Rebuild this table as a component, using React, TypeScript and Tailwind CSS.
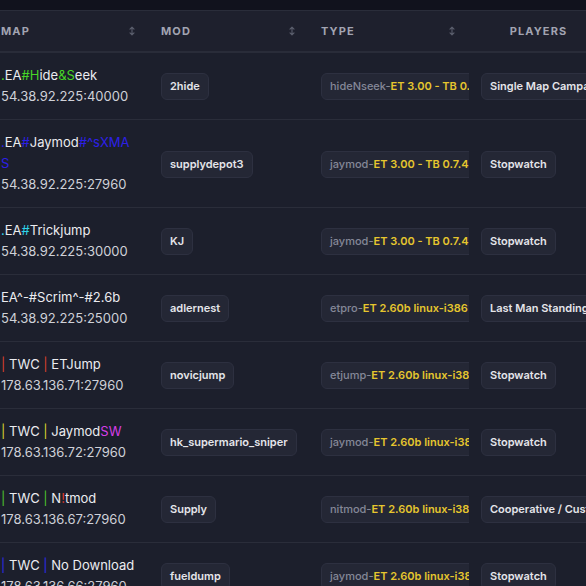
import { Fragment } from 'react'

type Seg = [string, string?]

interface Server {
  name: Seg[]
  ip: string
  map: string
  mod: string
  version: string
  gametype: string
}

const G = '#47d627'
const B = '#2d1fe8'
const C = '#2fd3e8'

const servers: Server[] = [
  { name: [['.', G], ['EA'], ['#H', G], ['ide'], ['&S', G], ['eek']], ip: '54.38.92.225:40000', map: '2hide', mod: 'hideNseek', version: 'ET 3.00 - TB 0.7.4 linux-i386', gametype: 'Single Map Campaign' },
  { name: [['.', B], ['EA'], ['#', B], ['Jaymod'], ['#^sXMAS', B]], ip: '54.38.92.225:27960', map: 'supplydepot3', mod: 'jaymod', version: 'ET 3.00 - TB 0.7.4 linux-i386', gametype: 'Stopwatch' },
  { name: [['.', C], ['EA'], ['#', C], ['Trickjump']], ip: '54.38.92.225:30000', map: 'KJ', mod: 'jaymod', version: 'ET 3.00 - TB 0.7.4 linux-i386', gametype: 'Stopwatch' },
  { name: [['EA^-#Scrim^-#2.6b']], ip: '54.38.92.225:25000', map: 'adlernest', mod: 'etpro', version: 'ET 2.60b linux-i386', gametype: 'Last Man Standing' },
  { name: [['|', '#d8402c'], [' TWC '], ['|', '#d8402c'], [' ETJump']], ip: '178.63.136.71:27960', map: 'novicjump', mod: 'etjump', version: 'ET 2.60b linux-i386', gametype: 'Stopwatch' },
  { name: [['|', '#d6d62c'], [' TWC '], ['|', '#d6d62c'], [' Jaymod'], ['SW', '#d63ee8']], ip: '178.63.136.72:27960', map: 'hk_supermario_sniper', mod: 'jaymod', version: 'ET 2.60b linux-i386', gametype: 'Stopwatch' },
  { name: [['|', '#4cc42c'], [' TWC '], ['|', '#4cc42c'], [' N'], ['!', '#e23a2a'], ['tmod']], ip: '178.63.136.67:27960', map: 'Supply', mod: 'nitmod', version: 'ET 2.60b linux-i386', gametype: 'Cooperative / Custom' },
  { name: [['|', '#2d2ae6'], [' TWC '], ['|', '#2d2ae6'], [' No Download']], ip: '178.63.136.66:27960', map: 'fueldump', mod: 'jaymod', version: 'ET 2.60b linux-i386', gametype: 'Stopwatch' },
]

function SortIcon() {
  return (
    <svg width="6" height="10" viewBox="0 0 6 10" fill="none" className="shrink-0">
      <path d="M3 1.5v7M1 3.2 3 1.2l2 2M1 6.8l2 2 2-2" stroke="#5c5f6e" strokeWidth="1.1" strokeLinecap="round" strokeLinejoin="round" />
    </svg>
  )
}

const badge = 'inline-block whitespace-nowrap rounded-md border border-[#2d3040] bg-[#242735] px-2 py-[5px] text-[11px] leading-[15px] font-semibold text-[#e4e5ea]'

export default function App() {
  return (
    <div className="h-[586px] w-[586px] overflow-hidden bg-[#11121d] pt-[10px] font-['Inter',sans-serif]">
      <div className="-ml-[15px] w-[700px] border-t border-[#2a2d3a] bg-[#1c1f2c]">
        <table className="w-[627px] table-fixed border-collapse text-left">
          <colgroup>
            <col className="w-[160px]" />
            <col className="w-[160px]" />
            <col className="w-[160px]" />
            <col className="w-[147px]" />
          </colgroup>
          <thead>
            <tr className="h-[41px] border-b-2 border-[#292c39] bg-[#1e202d] text-[11px] font-bold uppercase tracking-[0.1em] text-[#a2a4b2]">
              {['Map', 'Mod', 'Type'].map((h) => (
                <th key={h} className="pl-4 pr-[10px] font-bold">
                  <div className="flex items-center justify-between">
                    <span>{h}</span>
                    <SortIcon />
                  </div>
                </th>
              ))}
              <th className="px-4 text-center font-bold">Players</th>
            </tr>
          </thead>
          <tbody>
            {servers.map((s, i) => (
              <tr key={i} className="border-b border-[#2a2d3a] align-middle">
                <td className="py-3 pl-4 pr-2 text-[13px] leading-[21px]">
                  <div className="break-all text-[#ebecf0]">
                    {s.name.map(([t, c], j) => (
                      <Fragment key={j}>
                        {c ? <span style={{ color: c }}>{t}</span> : <span>{t}</span>}
                      </Fragment>
                    ))}
                  </div>
                  <div className="whitespace-nowrap text-[#cfd1d8]">{s.ip}</div>
                </td>
                <td className="px-4 py-3">
                  <span className={badge}>{s.map}</span>
                </td>
                <td className="px-4 py-3">
                  <div className="w-[148px] overflow-hidden">
                    <span className="inline-block whitespace-nowrap rounded-md border border-[#2d3040] bg-[#242735] px-2 py-[5px] text-[11px] leading-[15px]">
                      <span className="font-medium text-[#858898]">{s.mod}-</span>
                      <span className="font-semibold text-[#e6c62e]">{s.version}</span>
                    </span>
                  </div>
                </td>
                <td className="px-4 py-3">
                  <span className={badge}>{s.gametype}</span>
                </td>
              </tr>
            ))}
          </tbody>
        </table>
      </div>
    </div>
  )
}
